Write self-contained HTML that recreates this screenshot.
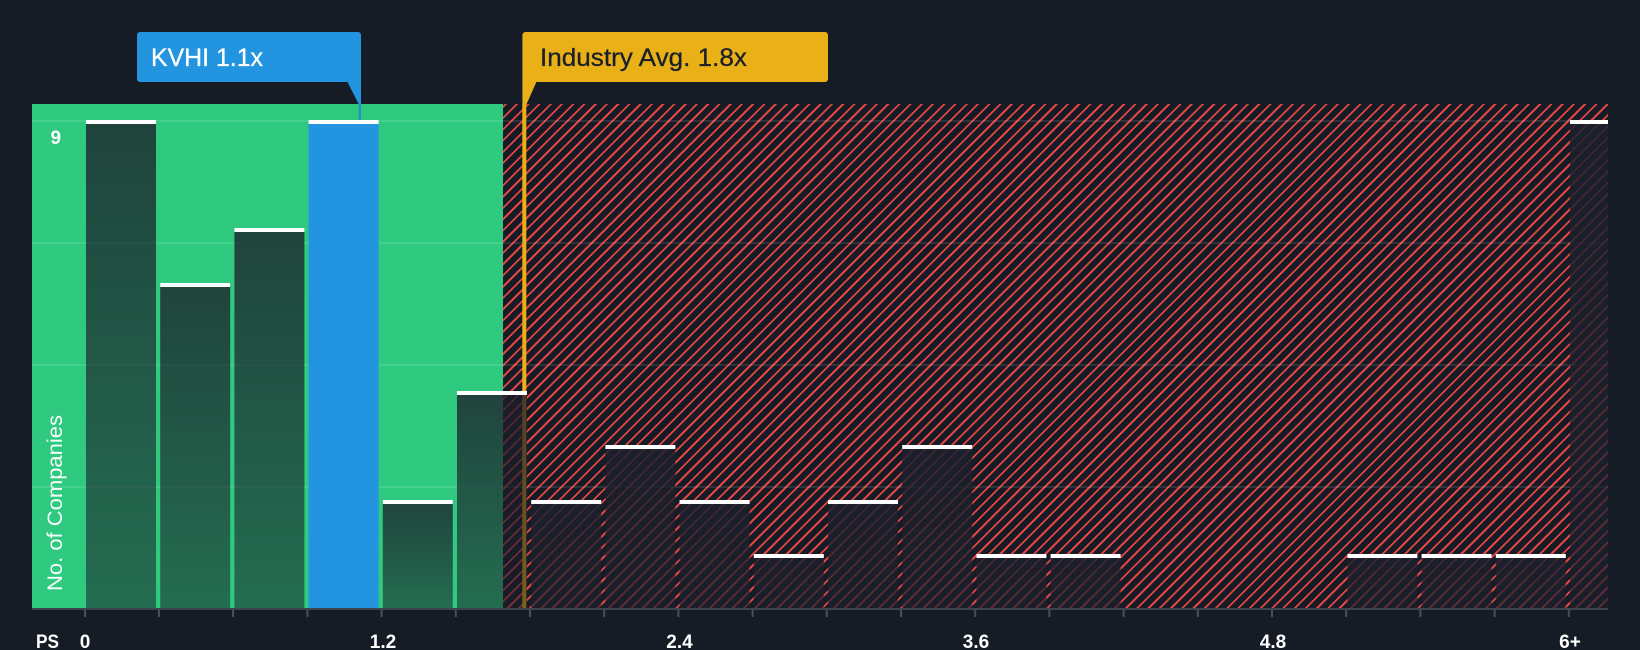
<!DOCTYPE html>
<html><head><meta charset="utf-8">
<style>
html,body{margin:0;padding:0;background:#151c25;width:1640px;height:650px;overflow:hidden}
svg{display:block;position:absolute;left:0;top:0}
text{font-family:"Liberation Sans",sans-serif}
#hatch{position:absolute;left:503px;top:104px;width:1105px;height:504px;background:repeating-linear-gradient(135deg,transparent 0,transparent 1.1px,#e54444 1.1px,#e54444 3px,transparent 3px,transparent 7.95px)}
</style></head><body>
<div id="hatch"></div>
<svg width="1640" height="650" viewBox="0 0 1640 650" xmlns="http://www.w3.org/2000/svg">
<defs>
<linearGradient id="g" x1="0" y1="0" x2="0" y2="1">
<stop offset="0" stop-color="#1b1d29" stop-opacity=".78"/>
<stop offset="1" stop-color="#1b1d29" stop-opacity=".54"/>
</linearGradient>
<linearGradient id="g2" x1="0" y1="0" x2="0" y2="1">
<stop offset="0" stop-color="#1b202c" stop-opacity=".86"/>
<stop offset="1" stop-color="#1b202c" stop-opacity=".66"/>
</linearGradient>
</defs>
<rect x="32" y="104" width="471" height="504" fill="#2fca80"/>
<g fill="#fff" fill-opacity=".1">
<rect x="32" y="120" width="1576" height="2"/>
<rect x="32" y="242" width="1576" height="2"/>
<rect x="32" y="364" width="1576" height="2"/>
<rect x="32" y="486" width="1576" height="2"/>
</g>
<rect x="522.3" y="104" width="4" height="504" fill="#e9b017"/>
<g fill="url(#g)">
<rect x="86" y="120" width="70" height="488"/>
<rect x="160.2" y="283" width="70" height="325"/>
<rect x="234.4" y="229" width="70" height="379"/>
<rect x="382.8" y="500" width="70" height="108"/>
<rect x="457" y="391" width="70" height="217"/>
</g>
<g fill="url(#g2)">
<rect x="531.2" y="500" width="70" height="108"/>
<rect x="605.4" y="446" width="70" height="162"/>
<rect x="679.6" y="500" width="70" height="108"/>
<rect x="753.8" y="554" width="70" height="54"/>
<rect x="828" y="500" width="70" height="108"/>
<rect x="902.2" y="446" width="70" height="162"/>
<rect x="976.4" y="554" width="70" height="54"/>
<rect x="1050.6" y="554" width="70" height="54"/>
<rect x="1347.4" y="554" width="70" height="54"/>
<rect x="1421.6" y="554" width="70" height="54"/>
<rect x="1495.8" y="554" width="70" height="54"/>
<rect x="1570" y="120" width="38" height="488"/>
</g>
<rect x="308.6" y="120" width="70" height="488" fill="#2394df"/>
<g fill="#fff">
<rect x="86" y="120" width="70" height="4"/>
<rect x="160.2" y="283" width="70" height="4"/>
<rect x="234.4" y="228" width="70" height="4"/>
<rect x="308.6" y="120" width="70" height="4"/>
<rect x="382.8" y="500" width="70" height="4"/>
<rect x="457" y="391" width="70" height="4"/>
<rect x="531.2" y="500" width="70" height="4"/>
<rect x="605.4" y="445" width="70" height="4"/>
<rect x="679.6" y="500" width="70" height="4"/>
<rect x="753.8" y="554" width="70" height="4"/>
<rect x="828" y="500" width="70" height="4"/>
<rect x="902.2" y="445" width="70" height="4"/>
<rect x="976.4" y="554" width="70" height="4"/>
<rect x="1050.6" y="554" width="70" height="4"/>
<rect x="1347.4" y="554" width="70" height="4"/>
<rect x="1421.6" y="554" width="70" height="4"/>
<rect x="1495.8" y="554" width="70" height="4"/>
<rect x="1570" y="120" width="38" height="4"/>
</g>
<rect x="32" y="608" width="1576" height="2" fill="#3e444d"/>
<g fill="#4a4f57">
<rect x="84" y="610" width="2" height="7"/><rect x="158" y="610" width="2" height="7"/><rect x="232" y="610" width="2" height="7"/><rect x="306.4" y="610" width="2" height="7"/><rect x="380.6" y="610" width="2" height="7"/><rect x="454.8" y="610" width="2" height="7"/><rect x="529" y="610" width="2" height="7"/><rect x="603.2" y="610" width="2" height="7"/><rect x="677.4" y="610" width="2" height="7"/><rect x="751.6" y="610" width="2" height="7"/><rect x="825.8" y="610" width="2" height="7"/><rect x="900" y="610" width="2" height="7"/><rect x="974.2" y="610" width="2" height="7"/><rect x="1048.4" y="610" width="2" height="7"/><rect x="1122.6" y="610" width="2" height="7"/><rect x="1196.8" y="610" width="2" height="7"/><rect x="1271" y="610" width="2" height="7"/><rect x="1345.2" y="610" width="2" height="7"/><rect x="1419.4" y="610" width="2" height="7"/><rect x="1493.6" y="610" width="2" height="7"/><rect x="1567.8" y="610" width="2" height="7"/>
</g>
<path d="M140 32H358a3 3 0 0 1 3 3V104H358.6L347.5 82H140a3 3 0 0 1-3-3V35a3 3 0 0 1 3-3Z" fill="#2394df"/>
<rect x="358.7" y="104" width="2.2" height="16" fill="#1f8fc8"/>
<path d="M526 32H825a3 3 0 0 1 3 3V79a3 3 0 0 1-3 3H536.4L526.6 104H522.4V35a3 3 0 0 1 3-3Z" fill="#e9b017"/>
<text x="151" y="66" font-size="25" fill="#fff" stroke="#fff" stroke-width=".3" textLength="112" lengthAdjust="spacingAndGlyphs">KVHI 1.1x</text>
<text x="540" y="66" font-size="25" fill="#1a202b" stroke="#1a202b" stroke-width=".3" textLength="207" lengthAdjust="spacingAndGlyphs">Industry Avg. 1.8x</text>
<text x="50.5" y="144" font-size="19" font-weight="700" fill="#fff">9</text>
<text transform="translate(62 591) rotate(-90)" font-size="21" fill="#fff" fill-opacity=".95" textLength="176" lengthAdjust="spacingAndGlyphs">No. of Companies</text>
<g font-size="19" font-weight="700" fill="#fff">
<text x="36" y="648" textLength="23" lengthAdjust="spacingAndGlyphs">PS</text>
<text x="85" y="648" text-anchor="middle">0</text>
<text x="383" y="648" text-anchor="middle">1.2</text>
<text x="679.5" y="648" text-anchor="middle">2.4</text>
<text x="976" y="648" text-anchor="middle">3.6</text>
<text x="1273" y="648" text-anchor="middle">4.8</text>
<text x="1570" y="648" text-anchor="middle">6+</text>
</g>
</svg>
</body></html>
